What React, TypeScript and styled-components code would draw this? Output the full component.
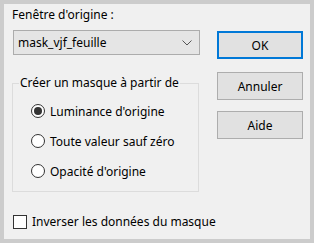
import styled, { createGlobalStyle } from 'styled-components';

const GlobalStyle = createGlobalStyle`
    html, body {
        margin: 0;
        padding: 0;
        background: #cccccc;
    }
    body {
        font-family: "Noto Sans", "Open Sans", sans-serif;
        font-size: 12px;
        color: #000000;
    }
`;

const Window = styled.div`
    box-sizing: border-box;
    width: 314px;
    height: 243px;
    border: 4px solid #cccccc;
    background: #f0f0f0;
    display: grid;
    grid-template-columns: 188px 86px;
    column-gap: 17px;
    padding: 0 0 0 8px;
`;

const LeftColumn = styled.div`
    display: flex;
    flex-direction: column;
`;

const RightColumn = styled.div`
    display: flex;
    flex-direction: column;
    padding-top: 27px;
`;

const Label = styled.div`
    margin-top: 3px;
    height: 15px;
    line-height: 15px;
    white-space: nowrap;
`;

const Combo = styled.div`
    box-sizing: border-box;
    margin: 8px 0 0 1px;
    height: 25px;
    width: 187px;
    background: #e5e5e5;
    border: 1px solid #acacac;
    display: flex;
    align-items: center;
    justify-content: space-between;
    padding: 0 7px 0 4px;
`;

const GroupBox = styled.fieldset`
    box-sizing: border-box;
    margin: 20px 0 0 0;
    padding: 0 0 5px 0;
    min-width: 0;
    width: 187px;
    border: 1px solid #dcdcdc;
    display: flex;
    flex-direction: column;
`;

const GroupTitle = styled.legend`
    margin-left: 6px;
    padding: 0 1px;
    line-height: 16px;
    white-space: nowrap;
`;

const RadioRow = styled.div`
    display: flex;
    align-items: center;
    gap: 5px;
    height: 30px;
    margin-left: 18px;
    white-space: nowrap;
    &:first-of-type {
        margin-top: 5px;
    }
`;

const RadioCircle = styled.span<{ $checked?: boolean }>`
    box-sizing: border-box;
    width: 14px;
    height: 14px;
    border-radius: 50%;
    border: 1px solid #333333;
    background: #ffffff;
    display: flex;
    align-items: center;
    justify-content: center;
    flex: none;
    &::after {
        content: '';
        width: 8px;
        height: 8px;
        border-radius: 50%;
        background: ${p => (p.$checked ? '#333333' : 'transparent')};
    }
`;

const CheckRow = styled.div`
    display: flex;
    align-items: center;
    gap: 5px;
    margin: 21px 0 0 1px;
    white-space: nowrap;
`;

const CheckBox = styled.span`
    box-sizing: border-box;
    width: 14px;
    height: 14px;
    border: 1px solid #333333;
    background: #ffffff;
    flex: none;
`;

const Button = styled.div<{ $primary?: boolean; $gap?: number }>`
    box-sizing: border-box;
    height: 28px;
    margin-top: ${p => p.$gap ?? 0}px;
    background: #e1e1e1;
    border: ${p => (p.$primary ? '2px solid #0078d7' : '1px solid #adadad')};
    display: flex;
    align-items: center;
    justify-content: center;
`;

const Chevron = () => (
    <svg width="10" height="6" viewBox="0 0 10 6">
        <path d="M0.5 0.5 L5 5 L9.5 0.5" fill="none" stroke="#555555" strokeWidth="1" />
    </svg>
);

export default function App() {
    return (
        <>
            <GlobalStyle />
            <Window>
                <LeftColumn>
                    <Label>Fenêtre d'origine :</Label>
                    <Combo>
                        <span>mask_vjf_feuille</span>
                        <Chevron />
                    </Combo>
                    <GroupBox>
                        <GroupTitle>Créer un masque à partir de</GroupTitle>
                        <RadioRow>
                            <RadioCircle $checked />
                            Luminance d'origine
                        </RadioRow>
                        <RadioRow>
                            <RadioCircle />
                            Toute valeur sauf zéro
                        </RadioRow>
                        <RadioRow>
                            <RadioCircle />
                            Opacité d'origine
                        </RadioRow>
                    </GroupBox>
                    <CheckRow>
                        <CheckBox />
                        Inverser les données du masque
                    </CheckRow>
                </LeftColumn>
                <RightColumn>
                    <Button $primary>OK</Button>
                    <Button $gap={13}>Annuler</Button>
                    <Button $gap={11}>Aide</Button>
                </RightColumn>
            </Window>
        </>
    );
}
